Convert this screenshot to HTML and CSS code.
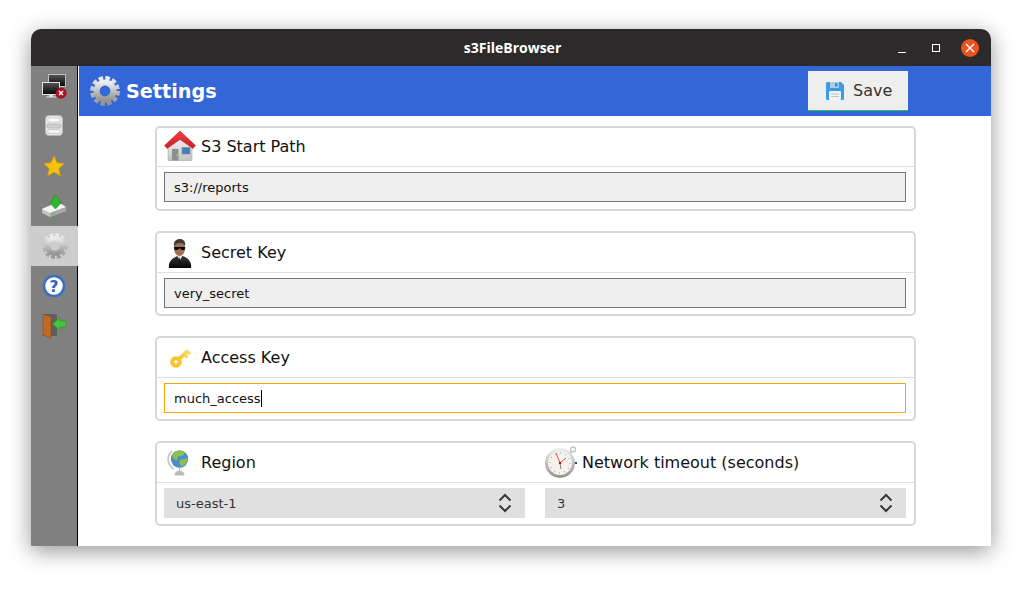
FILE: index.html
```html
<!DOCTYPE html>
<html lang="en">
<head>
    <meta charset="UTF-8">
    <title>s3FileBrowser</title>
    <link rel="stylesheet" href="styles.css">
</head>
<body>
    <svg class="defs" width="0" height="0">
        <defs>
            <linearGradient id="steel" x1="0" y1="0" x2="0" y2="1">
                <stop offset="0" stop-color="#ececec"/>
                <stop offset="1" stop-color="#969696"/>
            </linearGradient>
            <linearGradient id="screen" x1="0" y1="0" x2="0" y2="1">
                <stop offset="0" stop-color="#555"/>
                <stop offset="1" stop-color="#050505"/>
            </linearGradient>
            <linearGradient id="wall" x1="0" y1="0" x2="0" y2="1">
                <stop offset="0" stop-color="#f4f4f4"/>
                <stop offset="1" stop-color="#c4c4c4"/>
            </linearGradient>
            <linearGradient id="roof" x1="0" y1="0" x2="0" y2="1">
                <stop offset="0" stop-color="#ee4044"/>
                <stop offset="1" stop-color="#cc1f25"/>
            </linearGradient>
            <linearGradient id="suit" x1="0" y1="0" x2="0" y2="1">
                <stop offset="0" stop-color="#3a3a3a"/>
                <stop offset="1" stop-color="#050505"/>
            </linearGradient>
            <linearGradient id="brass" x1="0" y1="1" x2="1" y2="0">
                <stop offset="0" stop-color="#f5c52a"/>
                <stop offset="1" stop-color="#f9dc6a"/>
            </linearGradient>
            <symbol id="gear" viewBox="0 0 32 32">
                <circle cx="16" cy="16" r="13.6" fill="none" stroke="url(#steel)" stroke-width="4.6" stroke-dasharray="4.7 2.42"/>
                <circle cx="16" cy="16" r="9" fill="none" stroke="url(#steel)" stroke-width="6.5"/>
            </symbol>
            <symbol id="chevrons" viewBox="0 0 16 22">
                <path d="M2.5 8.5 8 3l5.500 5.500M2.500 13.500 8 19l5.500-5.500" fill="none" stroke="#3a3a3a" stroke-width="2"/>
            </symbol>
        </defs>
    </svg>

    <div class="window">
        <div class="titlebar">
            <span class="title">s3FileBrowser</span>
            <div class="controls">
                <span class="ctl-min"></span>
                <span class="ctl-max"></span>
                <span class="ctl-close">
                    <svg width="10" height="10" viewBox="0 0 10 10"><path d="M1 1l8 8M9 1l-8 8" stroke="#fff" stroke-width="1.300"/></svg>
                </span>
            </div>
        </div>

        <div class="content">
            <div class="sidebar">
                <div class="side-item">
                    <svg width="26" height="26" viewBox="0 0 26 26">
                        <rect x="7.500" y="1.500" width="17" height="12" fill="url(#screen)" stroke="#c0c0c0"/>
                        <rect x="1.500" y="9.500" width="17" height="12" fill="url(#screen)" stroke="#e0e0e0"/>
                        <path d="M8 22h4v1.500h3v1H5v-1h3z" fill="#ddd"/>
                        <circle cx="20" cy="20" r="5.200" fill="#b80f22" stroke="#7d0a17" stroke-width=".6"/>
                        <path d="M18 18l4 4m0-4l-4 4" stroke="#fff" stroke-width="1.500"/>
                    </svg>
                </div>
                <div class="side-item">
                    <svg width="24" height="24" viewBox="0 0 24 24">
                        <rect x="3.500" y="1.500" width="17" height="20" rx="3.500" fill="#e9e9e9" stroke="#b5b5b5"/>
                        <rect x="6" y="4" width="12" height="4" rx="1" fill="#fafafa" stroke="#bbb" stroke-width=".6"/>
                        <rect x="5" y="10" width="14" height="4" rx="1" fill="#cfcfcf" stroke="#aaa" stroke-width=".6"/>
                        <rect x="6" y="15.500" width="12" height="4" rx="1" fill="#f5f5f5" stroke="#bbb" stroke-width=".6"/>
                    </svg>
                </div>
                <div class="side-item">
                    <svg width="24" height="24" viewBox="0 0 24 24">
                        <path d="M12 2l3 6.800 7.200.8-5.400 4.900 1.500 7.300L12 18.100l-6.300 3.700 1.500-7.300L1.800 9.600 9 8.800z" fill="#f5c211" stroke="#d39e06" stroke-width=".8"/>
                    </svg>
                </div>
                <div class="side-item">
                    <svg width="26" height="24" viewBox="0 0 26 24">
                        <path d="M1 15 17 8l8 5v4L9 23l-8-4z" fill="#c4c4c4"/>
                        <path d="M1 15l16-7 8 5-16 6z" fill="#f4f4f4"/>
                        <path d="M9 19l16-6v4L9 23z" fill="#a8a8a8"/>
                        <circle cx="12" cy="20" r="1" fill="#3fd13f"/>
                        <path d="M13 1.500c3 0 5 1.500 5 4v2.500h3l-6.500 7L8 8h3.500V6.500c0-2 .5-3.500 1.500-5z" fill="#2fb52f" stroke="#1d8a1d" stroke-width=".5"/>
                    </svg>
                </div>
                <div class="side-item selected">
                    <svg width="26" height="26"><use href="#gear"/></svg>
                </div>
                <div class="side-item">
                    <svg width="24" height="24" viewBox="0 0 24 24">
                        <circle cx="12" cy="12" r="10" fill="#fff" stroke="#3a6fc4" stroke-width="2.500"/>
                        <text x="12" y="17.500" class="help-mark">?</text>
                    </svg>
                </div>
                <div class="side-item">
                    <svg width="26" height="26" viewBox="0 0 26 26">
                        <path d="M2 1h14v22H2z" fill="#5f5f5f"/>
                        <path d="M2 1l8 3v21l-8-3z" fill="#c06a25" stroke="#8a4a16" stroke-width=".6"/>
                        <path d="M25 8h-6V4.500L11.500 11l7.500 6.500V14h6z" fill="#43c43b" stroke="#259c22" stroke-width=".7"/>
                    </svg>
                </div>
            </div>

            <div class="main">
                <div class="header">
                    <div class="heading">
                        <svg width="30" height="30"><use href="#gear"/></svg>
                        <span>Settings</span>
                    </div>
                    <div class="save-btn">
                        <svg width="20" height="20" viewBox="0 0 20 20">
                            <path d="M1 2.500A1.500 1.500 0 0 1 2.500 1H16l3 3v13.500a1.500 1.500 0 0 1-1.500 1.500h-15A1.500 1.500 0 0 1 1 17.500z" fill="#3d9ae0"/>
                            <rect x="5" y="1" width="9" height="6" fill="#a9cde9"/>
                            <rect x="10" y="2" width="2.500" height="3.500" fill="#4d8fc4"/>
                            <rect x="4" y="10" width="12" height="9" rx="1" fill="#eef3f7"/>
                            <path d="M6 13h8M6 15.500h8" stroke="#b8c4cc"/>
                        </svg>
                        <span>Save</span>
                    </div>
                </div>

                <div class="cards">
                    <div class="card">
                        <div class="card-head first">
                            <span class="field-icon">
                                <svg width="32" height="32" viewBox="0 0 32 32">
                                    <path d="M4 16 16 7l12 9v14.500H4z" fill="url(#wall)" stroke="#aaa" stroke-width=".6"/>
                                    <path d="M.5 15.500 16 1l15.500 14.500-2.500 3L16 9.500 3 18.500z" fill="url(#roof)" stroke="#b51d22" stroke-width=".5"/>
                                    <rect x="8" y="19" width="6.500" height="11.500" fill="#8a8f8f"/>
                                    <circle cx="13" cy="25" r=".7" fill="#f0d050"/>
                                    <rect x="18" y="17.500" width="8" height="6.500" fill="#3f7fc0" stroke="#8a8a8a" stroke-width=".7"/>
                                </svg>
                            </span>
                            <span class="field-label">S3 Start Path</span>
                        </div>
                        <div class="card-body">
                            <div class="text-input">s3://reports</div>
                        </div>
                    </div>

                    <div class="card">
                        <div class="card-head">
                            <span class="field-icon">
                                <svg width="32" height="32" viewBox="0 0 32 32">
                                    <path d="M5 31c-.5-3 0-5 1.500-7 2-3 5-4 7-5h5c3 1 6 2.500 7 5 1.500 2 2 4 1.500 7z" fill="url(#suit)"/>
                                    <path d="M13 18.500h5.500L16 23.500z" fill="#e8e8e8"/>
                                    <path d="M15.500 20l1 5-1 2-1-2z" fill="#111"/>
                                    <ellipse cx="15.500" cy="11" rx="5.600" ry="8" fill="#a0714f"/>
                                    <path d="M10 9.500c-.8-5.500 2.500-7.500 5.800-7.500s6 2 5.300 7c-.8-2-2.800-3-5.300-3s-5 1-5.800 3.500z" fill="#3d3a38"/>
                                    <path d="M10 10h11.200v1.200l-.8 1.800h-3l-1.200-1.500h-1L13.500 13h-2.800z" fill="#0a0a0a"/>
                                </svg>
                            </span>
                            <span class="field-label">Secret Key</span>
                        </div>
                        <div class="card-body">
                            <div class="text-input">very_secret</div>
                        </div>
                    </div>

                    <div class="card">
                        <div class="card-head">
                            <span class="field-icon">
                                <svg width="32" height="32" viewBox="0 0 32 32">
                                    <path d="M15 17 24.500 8.500" fill="none" stroke="url(#brass)" stroke-width="4"/>
                                    <path d="M21 15l2-2 1.500 1.500-2 2zM24 12l2-2 1 1-2 2z" fill="#f5cc3a"/>
                                    <circle cx="12" cy="20" r="3.800" fill="none" stroke="#f5c52a" stroke-width="4"/>
                                </svg>
                            </span>
                            <span class="field-label">Access Key</span>
                        </div>
                        <div class="card-body">
                            <div class="text-input focused">much_access<span class="caret"></span></div>
                        </div>
                    </div>

                    <div class="card">
                        <div class="card-head split">
                            <div class="head-cell">
                                <span class="field-icon">
                                    <svg width="32" height="32" viewBox="0 0 32 32">
                                        <path d="M8 4a11 11 0 0 0 2 18" fill="none" stroke="#c8c8c8" stroke-width="1.800"/>
                                        <circle cx="15.500" cy="12" r="8.700" fill="#4a8fc9"/>
                                        <path d="M11 4.500c3-1.500 8-1 10 1l-2 3-5 1-1 4-4.500-2.500c-.5-3 .5-5 2.500-6.500zM16 13l7.500-2c0 4-2 7-5.500 8.500l-2.500-2.500z" fill="#8cc152"/>
                                        <path d="M15.500 21v3M11 28c0-2.500 2-4 4.500-4s4.500 1.500 4.500 4z" fill="#bbb" stroke="#bbb"/>
                                    </svg>
                                </span>
                                <span class="field-label">Region</span>
                            </div>
                            <div class="head-cell">
                                <span class="field-icon">
                                    <svg width="33" height="33" viewBox="0 0 33 33">
                                        <path d="M24 8l2-2" stroke="#999" stroke-width="2"/>
                                        <circle cx="28" cy="3.500" r="2.500" fill="none" stroke="#c4c4c4" stroke-width="1.400"/>
                                        <rect x="29" y="16" width="3" height="2" fill="#444"/>
                                        <circle cx="15" cy="17" r="13.500" fill="#f6f3ef" stroke="url(#steel)" stroke-width="3"/>
                                        <circle cx="15" cy="17" r="10" fill="none" stroke="#888" stroke-width="1.500" stroke-dasharray=".6 4.640"/>
                                        <path d="M15 17l-4-10M15 17l6-5" stroke="#c22" stroke-width=".8"/>
                                        <path d="M15 17l1 6" stroke="#666" stroke-width=".8"/>
                                        <circle cx="15" cy="17" r="1.200" fill="#a11"/>
                                    </svg>
                                </span>
                                <span class="field-label">Network timeout (seconds)</span>
                            </div>
                        </div>
                        <div class="card-body split">
                            <div class="select-box">
                                <span>us-east-1</span>
                                <svg width="16" height="22"><use href="#chevrons"/></svg>
                            </div>
                            <div class="select-box">
                                <span>3</span>
                                <svg width="16" height="22"><use href="#chevrons"/></svg>
                            </div>
                        </div>
                    </div>
                </div>
            </div>
        </div>
    </div>
</body>
</html>
```

FILE: styles.css
```css
* {
    box-sizing: border-box;
}
html, body {
    height: 100%;
}
body {
    margin: 0;
    padding: 29px 38px 0 31px;
    background-color: #fff;
    font-family: "DejaVu Sans", sans-serif;
    overflow: hidden;
}
.defs {
    display: block;
    height: 0;
}
.window {
    height: 517px;
    display: flex;
    flex-direction: column;
    border-radius: 10px 10px 0 0;
    background-color: #fff;
    box-shadow: 0 5px 22px rgba(0, 0, 0, 0.42);
}
.titlebar {
    height: 37px;
    flex: none;
    display: flex;
    align-items: center;
    justify-content: center;
    position: relative;
    padding-left: 3px;
    background-color: #2c2a2a;
    border-radius: 10px 10px 0 0;
}
.title {
    color: #fff;
    font-family: "Open Sans", sans-serif;
    font-weight: 700;
    font-size: 14px;
}
.controls {
    position: absolute;
    top: 0;
    right: 12px;
    height: 37px;
    display: flex;
    align-items: center;
}
.ctl-min {
    width: 8px;
    height: 1px;
    margin-top: 10px;
    margin-right: 26px;
    background-color: #fff;
}
.ctl-max {
    width: 8px;
    height: 8px;
    margin-right: 21px;
    border: 1px solid #fff;
}
.ctl-close {
    width: 18px;
    height: 18px;
    display: flex;
    align-items: center;
    justify-content: center;
    border-radius: 50%;
    background-color: #e95420;
}
.content {
    flex: 1;
    display: flex;
    min-height: 0;
}
.sidebar {
    width: 47px;
    flex: none;
    background-color: #808080;
    border-right: 1px solid #000;
}
.side-item {
    height: 40px;
    display: flex;
    align-items: center;
    justify-content: center;
}
.side-item.selected {
    margin-right: -1px;
    background-color: #cdcdcd;
}
.help-mark {
    font-family: "DejaVu Sans", sans-serif;
    font-weight: 700;
    font-size: 16px;
    text-anchor: middle;
    fill: #2f67c0;
}
.main {
    flex: 1;
    margin-left: 1px;
}
.header {
    height: 50px;
    display: flex;
    align-items: center;
    justify-content: space-between;
    padding: 0 83px 0 11px;
    background-color: #3366d6;
}
.heading {
    display: flex;
    align-items: center;
    gap: 6px;
    color: #fff;
    font-size: 19.2px;
    font-weight: 700;
}
.save-btn {
    width: 100px;
    height: 40px;
    display: flex;
    align-items: center;
    gap: 8px;
    padding-left: 17px;
    background-color: #eeeeee;
    border-bottom: 1px solid #2ebd59;
    color: #333;
    font-size: 16px;
}
.cards {
    display: flex;
    flex-direction: column;
    gap: 20px;
    padding: 10px 75px 0 76px;
}
.card {
    height: 85px;
    border: 2px solid #d8d8d8;
    border-radius: 5px;
}
.card-head {
    height: 40px;
    display: flex;
    align-items: center;
    padding: 0 8px 0 7px;
    border-bottom: 1px solid #dfdfdf;
}
.card-head.first {
    height: 39px;
    padding-bottom: 2px;
}
.card-body {
    padding: 5px 8px 0 7px;
}
.split {
    display: grid;
    grid-template-columns: 1fr 1fr;
    column-gap: 20px;
}
.head-cell {
    display: flex;
    align-items: center;
}
.field-icon {
    width: 37px;
    flex: none;
    display: flex;
}
.field-label {
    font-size: 16px;
    color: #111;
    white-space: nowrap;
}
.text-input {
    height: 30px;
    display: flex;
    align-items: center;
    padding-left: 9px;
    border: 1px solid #767676;
    background-color: #efefef;
    color: #111;
    font-size: 13px;
}
.text-input.focused {
    border-color: #f5a800;
    background-color: #fff;
}
.caret {
    width: 1px;
    height: 17px;
    background-color: #000;
}
.select-box {
    height: 30px;
    display: flex;
    align-items: center;
    justify-content: space-between;
    padding: 0 12px;
    background-color: #e0e0e0;
    color: #333;
    font-size: 13px;
}
```
